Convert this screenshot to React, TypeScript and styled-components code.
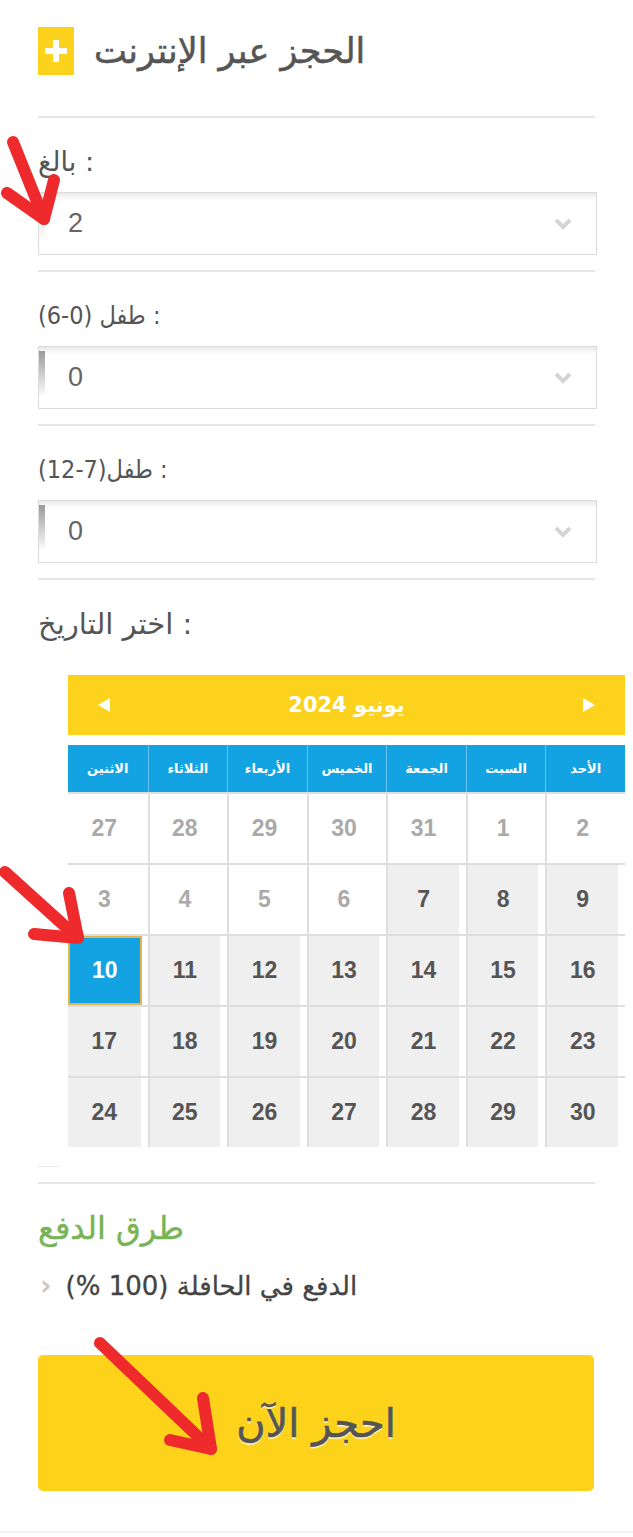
import React from "react";
import styled, { createGlobalStyle, css } from "styled-components";

const GlobalStyle = createGlobalStyle`
  html, body {
    margin: 0;
    padding: 0;
    background: #fff;
  }
  body {
    font-family: "DejaVu Sans", "Liberation Sans", sans-serif;
    color: #555;
  }
`;

const Page = styled.div`
  position: relative;
  width: 633px;
  min-height: 1537px;
  overflow: hidden;
`;

const Content = styled.div`
  width: 557px;
  padding-left: 38px;
`;

const Header = styled.div`
  display: flex;
  align-items: center;
  gap: 20px;
  padding-top: 27px;
  height: 48px;
`;

const PlusBox = styled.div`
  width: 36px;
  height: 48px;
  background: #fcd21c;
  display: flex;
  align-items: center;
  justify-content: center;
`;

const Title = styled.h2`
  margin: 0;
  font-size: 35px;
  font-weight: normal;
  color: #555;
  line-height: 48px;
  -webkit-text-stroke: 0.5px #555;
`;

const Divider = styled.div<{ $top?: number }>`
  height: 2px;
  background: #e6e6e6;
  margin-top: ${(p) => p.$top ?? 0}px;
`;

const Field = styled.div<{ $last?: boolean }>`
  padding-top: 28px;
  padding-bottom: ${(p) => (p.$last ? 0 : 15)}px;
  display: flex;
  flex-direction: column;
  gap: 14px;
`;

const Label = styled.div<{ $condensed?: boolean; $large?: boolean }>`
  font-size: ${(p) => (p.$large ? 29 : 27)}px;
  line-height: 32px;
  color: #555;
  ${(p) =>
    p.$condensed &&
    css`
      font-family: "DejaVu Sans Condensed", "DejaVu Sans", sans-serif;
      font-stretch: condensed;
      font-size: 25px;
    `}
`;

const SelectBox = styled.div<{ $dark?: boolean }>`
  position: relative;
  width: 559px;
  height: 63px;
  box-sizing: border-box;
  border: 1px solid #dcdcdc;
  box-shadow: inset 0 7px 7px -5px rgba(0, 0, 0, 0.13);
  display: flex;
  align-items: center;
  justify-content: space-between;
  padding: 0 24px 0 29px;
  font-family: "Liberation Sans", Arial, sans-serif;
  font-size: 27px;
  color: #666;
  &::before {
    content: "";
    position: absolute;
    left: 0;
    top: 4px;
    width: 6px;
    height: 46px;
    background: linear-gradient(
      to bottom,
      ${(p) => (p.$dark ? "#9a9a9a" : "#d8d8d8")},
      rgba(255, 255, 255, 0)
    );
  }
`;

const Chevron = () => (
  <svg width="18" height="12" viewBox="0 0 18 12">
    <path d="M2 2 L9 9 L16 2" fill="none" stroke="#d4d4d4" strokeWidth="4" />
  </svg>
);

const Calendar = styled.div`
  width: 557px;
  margin-left: 30px;
  margin-top: 35px;
`;

const CalHeader = styled.div`
  height: 60px;
  background: #fcd21c;
  display: flex;
  align-items: center;
  justify-content: space-between;
  padding: 0 30px;
  color: #fff;
  font-weight: bold;
  font-size: 21px;
`;

const WeekRow = styled.div`
  margin-top: 10px;
  height: 47px;
  background: #14a3e2;
  display: grid;
  grid-template-columns: repeat(7, 1fr);
`;

const WeekDay = styled.div`
  display: flex;
  align-items: center;
  justify-content: center;
  color: #fff;
  font-weight: bold;
  font-size: 13px;
  & + & {
    border-left: 1px solid rgba(255, 255, 255, 0.35);
  }
`;

const DaysGrid = styled.div`
  display: grid;
  grid-template-columns: repeat(7, 1fr);
  grid-auto-rows: 71px;
`;

const DayCell = styled.div<{ $first: boolean }>`
  border-top: 2px solid #dedede;
  border-left: ${(p) => (p.$first ? "none" : "2px solid #dedede")};
  display: flex;
`;

const DayInner = styled.div<{ $state: "off" | "on" | "sel" }>`
  flex: 1;
  margin-right: 7px;
  display: flex;
  align-items: center;
  justify-content: center;
  font-family: "Liberation Sans", Arial, sans-serif;
  font-weight: bold;
  font-size: 23px;
  ${(p) =>
    p.$state === "off" &&
    css`
      color: #aaa;
      background: transparent;
    `}
  ${(p) =>
    p.$state === "on" &&
    css`
      color: #555;
      background: #efefef;
    `}
  ${(p) =>
    p.$state === "sel" &&
    css`
      color: #fff;
      background: #14a3e2;
      border: 2px solid #e3b552;
      margin-right: 6px;
    `}
`;

const ShortLine = styled.div`
  width: 22px;
  height: 1px;
  background: #ececec;
  margin-top: 19px;
`;

const PayTitle = styled.div`
  margin-top: 24px;
  font-size: 32px;
  line-height: 40px;
  color: #78b457;
  -webkit-text-stroke: 0.4px #78b457;
`;

const PayOption = styled.div`
  margin-top: 22px;
  display: flex;
  align-items: center;
  gap: 14px;
  font-size: 26px;
  line-height: 32px;
  color: #444;
  -webkit-text-stroke: 0.3px #444;
`;

const Caret = styled.span`
  color: #c8c8c8;
  font-size: 28px;
  font-weight: bold;
  padding-left: 2px;
  -webkit-text-stroke: 0;
`;

const BookButton = styled.button`
  display: flex;
  align-items: center;
  justify-content: center;
  width: 556px;
  height: 136px;
  margin-top: 53px;
  border: none;
  border-radius: 5px;
  background: #fdd21a;
  font-family: "DejaVu Sans", sans-serif;
  font-size: 40px;
  color: #555;
  -webkit-text-stroke: 0.6px #555;
  text-shadow: 0 2px 1px rgba(255, 255, 255, 0.7);
  cursor: pointer;
`;

const BottomLine = styled.div`
  height: 2px;
  background: #f1f1f1;
  margin-top: 40px;
  width: 633px;
  margin-left: -38px;
`;

const Annotations = styled.svg`
  position: absolute;
  left: 0;
  top: 0;
  pointer-events: none;
`;

type Arrow = { from: [number, number]; tip: [number, number]; w1: [number, number]; w2: [number, number] };

const arrows: Arrow[] = [
  { from: [13, 142], tip: [44, 219], w1: [7, 193], w2: [54, 180] },
  { from: [5, 872], tip: [78, 938], w1: [34, 934], w2: [69, 893] },
  { from: [100, 1343], tip: [211, 1449], w1: [170, 1440], w2: [203, 1398] },
];

const weekDays = ["الاثنين", "الثلاثاء", "الأربعاء", "الخميس", "الجمعة", "السبت", "الأحد"];

const days: { n: number; s: "off" | "on" | "sel" }[] = [
  ...[27, 28, 29, 30, 31, 1, 2, 3, 4, 5, 6].map((n) => ({ n, s: "off" as const })),
  { n: 7, s: "on" },
  { n: 8, s: "on" },
  { n: 9, s: "on" },
  { n: 10, s: "sel" },
  ...Array.from({ length: 20 }, (_, i) => ({ n: i + 11, s: "on" as const })),
];

const fields = [
  { label: "بالغ :", value: "2", condensed: false, dark: false },
  { label: "طفل (0-6) :", value: "0", condensed: true, dark: true },
  { label: "طفل(7-12) :", value: "0", condensed: true, dark: true },
];

export default function App() {
  return (
    <Page>
      <GlobalStyle />
      <Content>
        <Header>
          <PlusBox>
            <svg width="26" height="26" viewBox="0 0 26 26">
              <path d="M13 2 V24 M2 13 H24" stroke="#fff" strokeWidth="6" />
            </svg>
          </PlusBox>
          <Title>الحجز عبر الإنترنت</Title>
        </Header>
        <Divider $top={41} />

        {fields.map((f) => (
          <React.Fragment key={f.label}>
            <Field>
              <Label $condensed={f.condensed}>{f.label}</Label>
              <SelectBox $dark={f.dark}>
                <span>{f.value}</span>
                <Chevron />
              </SelectBox>
            </Field>
            <Divider />
          </React.Fragment>
        ))}

        <Field $last>
          <Label $large>اختر التاريخ :</Label>
        </Field>

        <Calendar>
          <CalHeader>
            <svg width="12" height="14" viewBox="0 0 12 14">
              <path d="M12 0 L0 7 L12 14 Z" fill="#fff" />
            </svg>
            <span>يونيو 2024</span>
            <svg width="12" height="14" viewBox="0 0 12 14">
              <path d="M0 0 L12 7 L0 14 Z" fill="#fff" />
            </svg>
          </CalHeader>
          <WeekRow>
            {weekDays.map((d) => (
              <WeekDay key={d}>{d}</WeekDay>
            ))}
          </WeekRow>
          <DaysGrid>
            {days.map((d, i) => (
              <DayCell key={i} $first={i % 7 === 0}>
                <DayInner $state={d.s}>{d.n}</DayInner>
              </DayCell>
            ))}
          </DaysGrid>
        </Calendar>

        <ShortLine />
        <Divider $top={15} />

        <PayTitle>طرق الدفع</PayTitle>
        <PayOption>
          <Caret>›</Caret>
          <span>الدفع في الحافلة (100 %)</span>
        </PayOption>

        <BookButton>احجز الآن</BookButton>
        <BottomLine />
      </Content>

      <Annotations width="633" height="1537" viewBox="0 0 633 1537">
        {arrows.map((a, i) => (
          <g key={i} fill="none" stroke="#ee2a2c" strokeWidth="12" strokeLinecap="round" strokeLinejoin="round">
            <line x1={a.from[0]} y1={a.from[1]} x2={a.tip[0]} y2={a.tip[1]} />
            <polyline points={`${a.w1[0]},${a.w1[1]} ${a.tip[0]},${a.tip[1]} ${a.w2[0]},${a.w2[1]}`} />
          </g>
        ))}
      </Annotations>
    </Page>
  );
}
